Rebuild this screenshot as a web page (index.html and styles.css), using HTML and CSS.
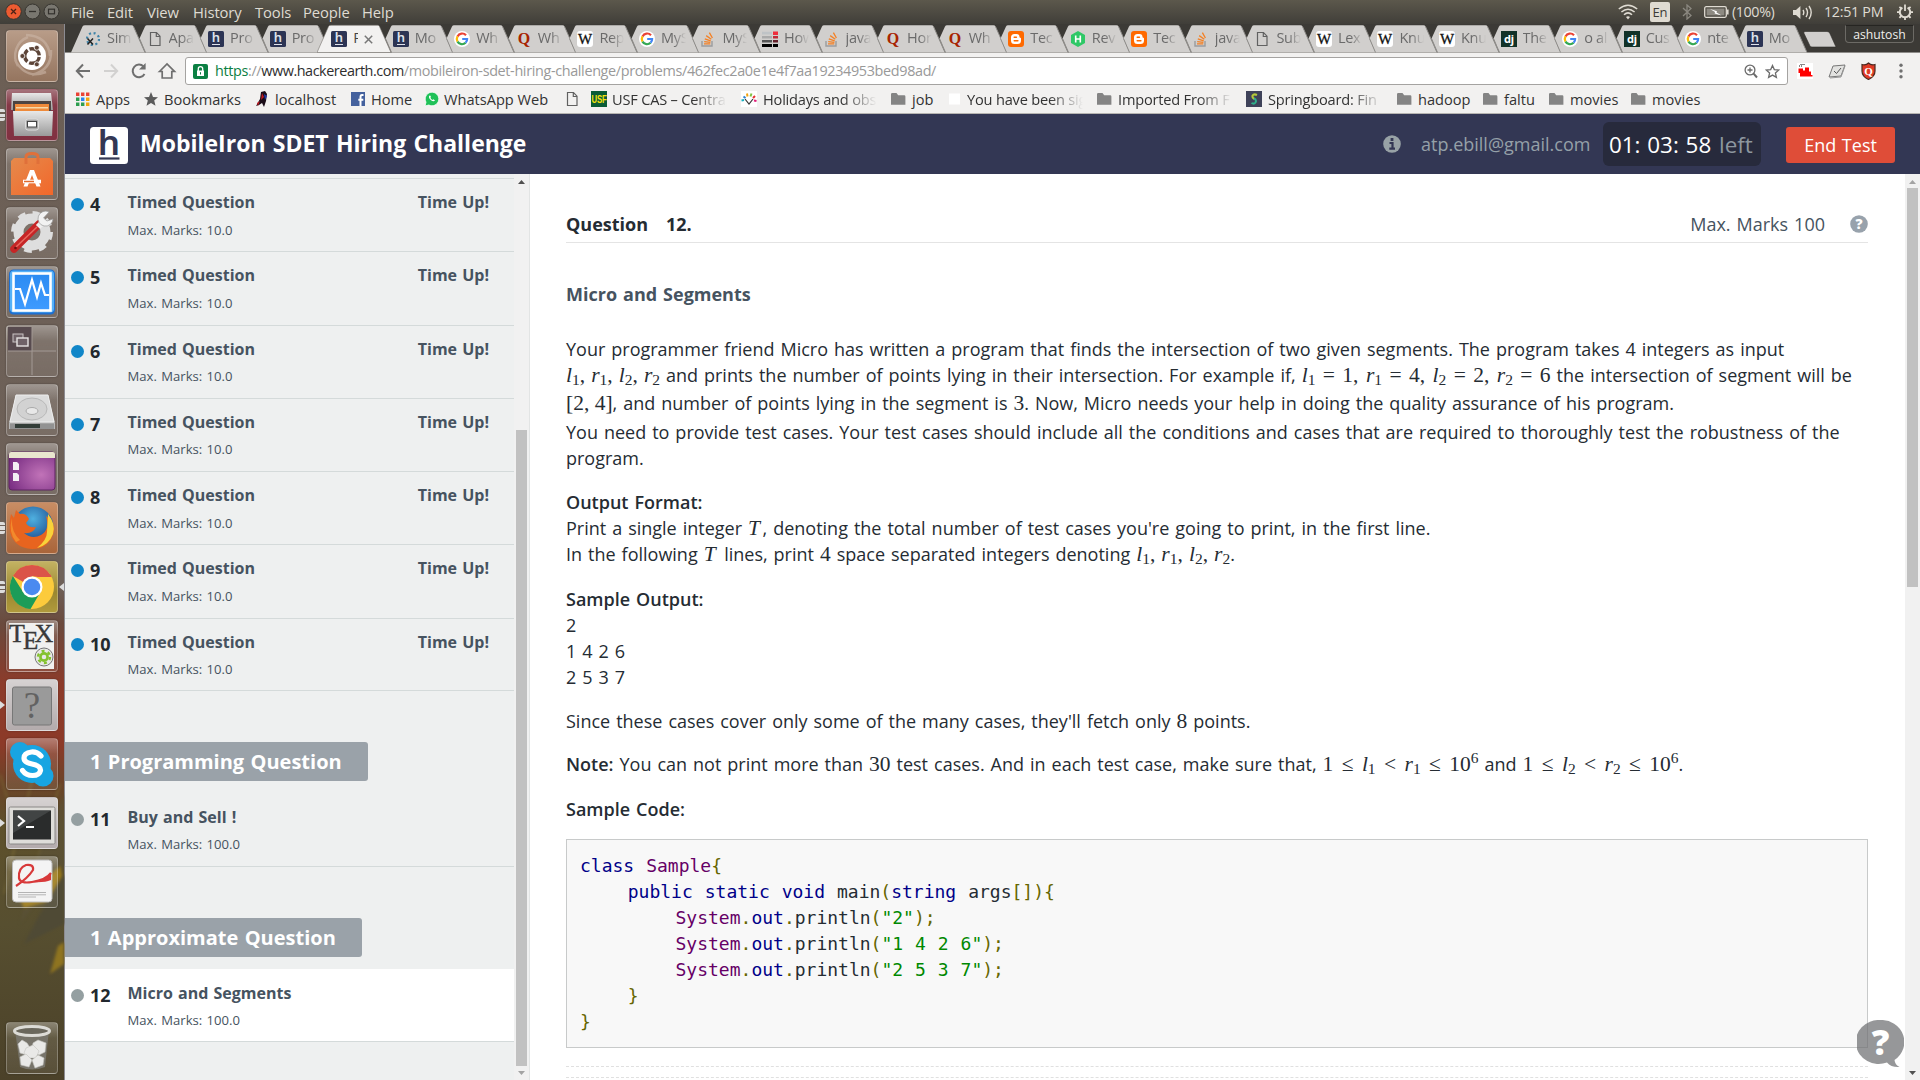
FILE: index.html
```html
<!DOCTYPE html>
<html lang="en">
<head>
<meta charset="utf-8">
<title>MobileIron SDET Hiring Challenge</title>
<link rel="stylesheet" href="styles.css">
</head>
<body>
<svg class="defs" width="0" height="0">
  <defs>
    <linearGradient id="steel" x1="0" y1="0" x2="0" y2="1"><stop offset="0" stop-color="#e8e8e8"/><stop offset="1" stop-color="#9a9a9a"/></linearGradient>
    <linearGradient id="bag" x1="0" y1="0" x2="1" y2="1"><stop offset="0" stop-color="#e58a4c"/><stop offset="1" stop-color="#f2672a"/></linearGradient>
    <linearGradient id="vm" x1="0" y1="0" x2="0" y2="1"><stop offset="0" stop-color="#2b8bf2"/><stop offset="1" stop-color="#3f9bff"/></linearGradient>
    <radialGradient id="purple" cx=".7" cy=".6" r=".8"><stop offset="0" stop-color="#c173b8"/><stop offset="1" stop-color="#752a80"/></radialGradient>
    <radialGradient id="globe" cx=".5" cy=".3" r=".7"><stop offset="0" stop-color="#4fb0e0"/><stop offset="1" stop-color="#12387e"/></radialGradient>
  </defs>
  <symbol id="tab" viewBox="0 0 76 28"><path d="M12.5 28L6.5 14L12 2Q12.6 .7 14 .7H60.5Q62 .7 62.5 2L74 28Z" fill="#d1cfcd"/><path d="M12.5 28L6.5 14M62.5 2L74 28" stroke="#8e8c89" fill="none"/></symbol>
  <symbol id="tab-full" viewBox="0 0 76 28"><path d="M0 28L11.5 2Q12.2 .7 14 .7H60.5Q62 .7 62.5 2L74 28Z" fill="#d1cfcd"/><path d="M62.5 2L74 28" stroke="#8e8c89" fill="none"/></symbol>
  <symbol id="tab-active" viewBox="0 0 76 28"><path d="M0 28L11.5 2Q12.2 .7 14 .7H60.5Q62 .7 62.5 2L74 28Z" fill="#f2f1f0" stroke="#77746f" stroke-width=".6"/></symbol>
  <symbol id="f-sim" viewBox="0 0 16 16"><circle cx="8" cy="8" r="6" fill="none" stroke="#3d83a8" stroke-width="2.200" stroke-dasharray="2 2.700"/><path d="M2.5 7.5L8 13.5M8 7.5L2.5 13.5" stroke="#222" stroke-width="1.5"/></symbol>
  <symbol id="f-doc" viewBox="0 0 16 16"><path d="M3.5 1.5H9.5L13 5.2V14.5H3.5ZM9.3 1.5V5.5H13" fill="none" stroke="#616161" stroke-width="1.2"/></symbol>
  <symbol id="f-h" viewBox="0 0 16 16"><rect width="16" height="16" rx="1.5" fill="#2c3454"/><text x="8" y="11.2" text-anchor="middle" font-family="Noto Sans" font-weight="600" font-size="13" fill="#dfe2ec">h</text><path d="M4 13.5H12" stroke="#dfe2ec"/></symbol>
  <symbol id="f-g" viewBox="0 0 16 16"><circle cx="8" cy="8" r="8" fill="#fff"/><path d="M12 4.2A5.2 5.2 0 0 0 3.5 5.4" stroke="#ea4335" stroke-width="2.2" fill="none"/><path d="M3.5 5.4A5.4 5.4 0 0 0 3.5 10.6" stroke="#fbbc05" stroke-width="2.2" fill="none"/><path d="M3.5 10.6A5.2 5.2 0 0 0 11.6 11.8" stroke="#34a853" stroke-width="2.2" fill="none"/><path d="M11.6 11.8A5.2 5.2 0 0 0 13.1 8H8.2" stroke="#4285f4" stroke-width="2.2" fill="none"/></symbol>
  <symbol id="f-q" viewBox="0 0 16 16"><text x="8" y="13" text-anchor="middle" font-family="Liberation Serif" font-weight="700" font-size="16" fill="#a82400">Q</text></symbol>
  <symbol id="f-w" viewBox="0 0 16 16"><rect width="16" height="16" rx="3" fill="#fff"/><text x="8" y="13" text-anchor="middle" font-family="Liberation Serif" font-size="15" fill="#111" stroke="#111" stroke-width=".3">W</text></symbol>
  <symbol id="f-so" viewBox="0 0 16 16"><path d="M2 10V15H12V10" fill="none" stroke="#9a9c9e" stroke-width="1.4"/><path d="M4 12.8H10.3M4.2 10.6L10.4 11.4M4.8 7.8L10.7 9.8M6.2 4.6L11.3 8.2M9.4 1.6L12.4 7" stroke="#f48024" stroke-width="1.3"/></symbol>
  <symbol id="f-how" viewBox="0 0 16 16"><path d="M0 5H10V7.5H0Z" fill="#aaa"/><path d="M0 9H10V11.5H0Z" fill="#555"/><path d="M0 13H10V16H0ZM11 13H16V16H11Z" fill="#000"/><path d="M11 .5H16V4H11Z" fill="#ef2d3c"/><path d="M11 5H16V7.5H11Z" fill="#c02a38"/><path d="M11 9H16V11.5H11Z" fill="#64202a"/><path d="M0 .8H10V3.4H0Z" fill="#bfc3c6"/></symbol>
  <symbol id="f-b" viewBox="0 0 16 16"><rect width="16" height="16" rx="3" fill="#ff6a00"/><path d="M6.500 3H8.500Q11.500 3 11.500 6Q11.500 6.800 12.300 6.800Q13 6.800 13 7.600V9.500Q13 13 9.500 13H6.500Q3 13 3 9.500V6.500Q3 3 6.500 3Z" fill="#fff"/><path d="M6.200 6.200H8.400M6.200 9.800H9.900" stroke="#ff6a00" stroke-width="1.500" stroke-linecap="round"/></symbol>
  <symbol id="f-hr" viewBox="0 0 16 16"><path d="M8 0L15 4V12L8 16L1 12V4Z" fill="#2ec866"/><path d="M5.7 4.5V11.5M10.3 4.5V11.5M5.7 8H10.3" stroke="#fff" stroke-width="1.6"/></symbol>
  <symbol id="f-dj" viewBox="0 0 16 16"><rect width="16" height="16" fill="#113228"/><text x="8" y="11.6" text-anchor="middle" font-family="Noto Sans" font-weight="700" font-size="11" fill="#fff">dj</text></symbol>
  <symbol id="folder" viewBox="0 0 15 16"><path d="M0 3.2Q0 2 1.2 2H5.5L7.2 4.2H13.2Q14.4 4.2 14.4 5.4V13.8H0Z" fill="#848484"/></symbol>
</svg>

<header class="panel">
  <svg class="winbtns" viewBox="0 0 62 24"><circle cx="13.5" cy="11.5" r="7.8" fill="#ec5b31" stroke="#373530"/><path d="M11 9L16 14M16 9L11 14" stroke="#4b2216" stroke-width="1.3"/><circle cx="32.5" cy="11.5" r="7.5" fill="#797770" stroke="#373530"/><path d="M29 11.5H36" stroke="#33312d" stroke-width="1.3"/><circle cx="51.5" cy="11.5" r="7.5" fill="#797770" stroke="#373530"/><rect x="48.5" y="9.2" width="6" height="4.6" fill="none" stroke="#33312d" stroke-width="1.2"/></svg>
  <nav class="menus"><span>File</span><span>Edit</span><span>View</span><span>History</span><span>Tools</span><span>People</span><span>Help</span></nav>
  <div class="tray">
    <svg width="20" height="16" viewBox="0 0 20 16" fill="none" stroke="#dfdbd2" stroke-width="1.5"><path d="M.8 5Q10-2.6 19.2 5M3.4 8Q10 2.4 16.6 8M6 10.8Q10 7 14 10.8"/><path d="M8 13L10 15.4L12 13Q10 11.4 8 13Z" fill="#dfdbd2" stroke="none"/></svg>
    <span class="lang">En</span>
    <svg class="bt" width="10" height="16" viewBox="0 0 10 16" fill="none" stroke="#8b8880" stroke-width="1.3"><path d="M1 4L9 11.5L5 15V1L9 4.5L1 12"/></svg>
    <svg class="bat" width="25" height="12" viewBox="0 0 25 12"><rect x=".7" y=".7" width="21.6" height="10.6" rx="1.5" fill="none" stroke="#dfdbd2" stroke-width="1.3"/><rect x="2.6" y="2.6" width="17.8" height="6.8" fill="#8d8a82"/><path d="M23 3.5H24.6V8.5H23Z" fill="#dfdbd2"/><path d="M6 3L13 5.2L12.5 6.4L17.6 9.6L10.6 7.4L11 6Z" fill="#fff"/></svg>
    <span class="pct">(100%)</span>
    <svg class="vol" width="20" height="15" viewBox="0 0 20 15" fill="none" stroke="#dfdbd2" stroke-width="1.4"><path d="M0 5H3L7.4 1V14L3 10H0Z" fill="#dfdbd2" stroke="none"/><path d="M10 5Q11.6 7.5 10 10M13 3Q16 7.5 13 12M16 1Q20.4 7.5 16 14"/></svg>
    <span class="clock">12:51 PM</span>
    <svg class="gear" width="16" height="16" viewBox="0 0 16 16" fill="none" stroke="#dfdbd2"><path d="M5.4 3.6A5.2 5.2 0 1 0 10.6 3.6" stroke-width="2"/><path d="M8 .5V7" stroke-width="1.8"/><path d="M0 8.2H3M13 8.2H16M8 13V16M2.4 2.8L4.2 4.4M13.6 2.8L11.8 4.4M2.4 13.8L4.2 12M13.6 13.8L11.8 12" stroke-width="1.8"/></svg>
  </div>
</header>

<div class="desktop">
<aside class="launcher">
  <svg class="petals" viewBox="0 0 64 230"><path d="M0 0L18 60L4 120M34 0L10 90M60 10L30 110" stroke="#7b6a35" stroke-width="2" fill="none" opacity=".6"/><path d="M64 20L34 90L20 150L64 90Z" fill="#5a5238" opacity=".6"/><path d="M16 118L34 104L38 92L46 104L60 92L62 102L54 116L46 128L24 134Z" fill="#9c7a18"/><path d="M64 100L40 140L24 170L64 150Z" fill="#4f4a35"/><path d="M58 172L64 168V190L50 200Z" fill="#8f7420"/></svg>

  <div class="tile t-brown"><svg viewBox="0 0 52 52"><path d="M12 36A20 20 0 0 1 22 7M20 5Q42 6 44 26M45 20Q46 40 26 45M40 42Q20 50 9 30" fill="none" stroke="#cbb6a6" stroke-width="2.500" opacity=".6"/><circle cx="26" cy="26" r="14" fill="#fff"/><circle cx="26" cy="26" r="7.3" fill="none" stroke="#5c4438" stroke-width="3.4" stroke-dasharray="13.3 2" stroke-dashoffset="-1"/><g fill="#5c4438" stroke="#fff" stroke-width=".8"><circle cx="16.4" cy="26" r="2.5"/><circle cx="30.8" cy="17.7" r="2.5"/><circle cx="30.8" cy="34.3" r="2.5"/></g></svg></div>
  <div class="tile t-maroon run3"><svg viewBox="0 0 52 52"><path d="M6 4H45L47 21H5Z" fill="url(#steel)"/><path d="M7 12H45V22H7Z" fill="#4d4542"/><path d="M9 15H43V22H9Z" fill="#ee8a3a"/><path d="M10 18H42V19.5H10Z" fill="#f7d9a8"/><path d="M7 22H47L46 47H8Z" fill="url(#steel)"/><rect x="19.500" y="30" width="13" height="11" rx="2.500" fill="#a8a8a8" stroke="#ddd"/><rect x="21.500" y="32.500" width="9" height="5.500" fill="#fff" stroke="#444"/></svg></div>
  <div class="tile"><svg viewBox="0 0 52 52"><path d="M5 13L8 10H44L47 13V47H5Z" fill="url(#bag)"/><path d="M20 16V9Q20 5.500 26 5.500Q32 5.500 32 9V16" fill="none" stroke="#e0703a" stroke-width="3"/><path d="M24 22H28L34.500 38.500H30.500L26 27L21.500 38.500H17.500Z" fill="#fff"/><path d="M17 33.500H35" stroke="#fff" stroke-width="3.600"/><path d="M18 33.500H28" stroke="#e06a2c" stroke-width="1.500"/></svg></div>
  <div class="tile"><svg viewBox="0 0 52 52"><circle cx="26" cy="25" r="13.500" fill="none" stroke="#dedede" stroke-width="10"/><circle cx="26" cy="25" r="18.500" fill="none" stroke="#dedede" stroke-width="5" stroke-dasharray="7.500 7.030"/><path d="M8 42L33 17" stroke="#c62526" stroke-width="7.500" stroke-linecap="round"/><path d="M10 40L31 20" stroke="#e86a60" stroke-width="1.500"/><path d="M32 20L38 14" stroke="#eee" stroke-width="6"/><path d="M43 5A7.500 7.500 0 1 0 47 12L41 14L37.500 11Z" fill="#f2f2f2" stroke="#999" stroke-width=".7"/><circle cx="9.500" cy="41" r="1.300" fill="#6d1010"/></svg></div>
  <div class="tile"><svg viewBox="0 0 52 52"><rect x="3" y="3.500" width="46" height="45" rx="4.500" fill="#1e6fd0"/><rect x="4" y="4.500" width="44" height="42" rx="4" fill="#55b1f8"/><rect x="7.500" y="7.500" width="37" height="37" fill="url(#vm)" stroke="#fff" stroke-width="2.600"/><path d="M9 23H14L19 38L26 14L31 31L35 17L39 29H43" fill="none" stroke="#fff" stroke-width="2.200"/></svg></div>
  <div class="tile"><svg viewBox="0 0 52 52"><rect x="2" y="2" width="24" height="24" fill="#584b4f"/><path d="M26 2V50M2 26H50" stroke="#a39a95"/><rect x="7" y="9" width="10" height="8" fill="#6f6268" stroke="#c9c4c4"/><rect x="11" y="13" width="11" height="8" fill="#6f6268" stroke="#e6e3e3" stroke-width="1.400"/></svg></div>
  <div class="tile"><svg viewBox="0 0 52 52"><path d="M10 11H42L49 39V45H3V39Z" fill="#b7b7b7"/><path d="M10 11H42L48 38H4Z" fill="#dcdcdc" stroke="#eee"/><ellipse cx="26" cy="25" rx="15" ry="11" fill="#d2d2d2" stroke="#b8b8b8"/><ellipse cx="26" cy="27" rx="6" ry="3.500" fill="#e8e8e8" stroke="#aaa"/><path d="M4 39.500H48V45H4Z" fill="#929292"/><path d="M9 40H34V44H9Z" fill="#333d38"/></svg></div>
  <div class="tile"><svg viewBox="0 0 52 52"><rect x="3" y="9" width="46" height="38" rx="3" fill="url(#purple)" stroke="#5e2462"/><path d="M3 11Q3 9 5 9H47Q49 9 49 11V15H3Z" fill="#e9e6cf"/><path d="M7 19H11L13 21V27H7ZM7 30H11L13 32V38H7Z" fill="#f3eef3"/></svg></div>
  <div class="tile t-orange run3"><svg viewBox="0 0 52 52"><circle cx="27" cy="25" r="20.500" fill="url(#globe)"/><path d="M5 12L8 16L10 8L14 12Q20 11 23 17L20 21Q22 26 30 25Q27 32 18 31Q26 38 35 33Q44 28 40 14Q49 20 48 29Q44 47 26 47Q8 46 4 30Q3 20 5 12Z" fill="#e8641f"/><path d="M42 12Q50 22 47 32Q43 43 31 46Q41 38 41 30Z" fill="#f8d23a"/><path d="M6 16Q5 30 14 38L10 40Q2 30 6 16Z" fill="#f28a2c"/></svg></div>
  <div class="tile t-gold run3 focus"><svg viewBox="0 0 52 52"><circle cx="26" cy="26" r="22" fill="#fccb3c"/><path d="M26 26L6.900 15A22 22 0 0 1 45.100 15H26Z" fill="#db5349"/><path d="M6.900 15A22 22 0 0 0 24.500 48L34.500 31L17 31Z" fill="#1c9c58"/><path d="M26 16H45.600L44 13Z" fill="#db5349"/><circle cx="26" cy="26" r="10.500" fill="#fff"/><circle cx="26" cy="26" r="8.300" fill="#4a8af0"/></svg></div>
  <div class="tile"><svg viewBox="0 0 52 52"><rect x="3" y="3" width="45" height="46" fill="#f1f1f0"/><g font-family="Liberation Serif" fill="#3a3a3a" stroke="#3a3a3a" stroke-width=".4"><text x="3" y="22" font-size="26">T</text><text x="17" y="28.500" font-size="25">E</text><text x="28.500" y="22" font-size="26">X</text></g><circle cx="38" cy="37" r="9" fill="#e8e8e6" stroke="#777"/><circle cx="38" cy="37" r="3.600" fill="none" stroke="#83c22e" stroke-width="2.600"/><circle cx="38" cy="37" r="6" fill="none" stroke="#83c22e" stroke-width="2.400" stroke-dasharray="3 3.280"/></svg></div>
  <div class="tile t-light run1"><svg viewBox="0 0 52 52"><rect x="6.500" y="8" width="39" height="38" rx="2" fill="#9a9a9a" stroke="#777"/><text x="26" y="39" text-anchor="middle" font-family="Liberation Serif" font-size="37" fill="#626262">?</text></svg></div>
  <div class="tile"><svg viewBox="0 0 52 52"><circle cx="26" cy="26" r="19" fill="#18a5e2"/><circle cx="14" cy="14" r="10" fill="#18a5e2"/><circle cx="37" cy="38" r="10.500" fill="#18a5e2"/><path d="M35 18Q31 13.500 25.500 14Q18 15 18 20Q18 24.500 26 26Q35 28 34.500 32.500Q33.500 37.500 26.500 37.500Q20 37.500 16.500 32.500" fill="none" stroke="#fff" stroke-width="5.200" stroke-linecap="round"/></svg></div>
  <div class="tile t-light run1"><svg viewBox="0 0 52 52"><rect x="3" y="10" width="46" height="37" rx="1.500" fill="#deddd9" stroke="#8a8886"/><rect x="7" y="13.500" width="38" height="29" fill="#2a2c2c"/><path d="M7 13.500H45L7 36Z" fill="#414444"/><path d="M12 19L18 24L12 29M20 30H28" fill="none" stroke="#fff" stroke-width="2.200"/></svg></div>
  <div class="tile"><svg viewBox="0 0 52 52"><rect x="6.500" y="4" width="39.500" height="42" rx="3.500" fill="#f4f4f4" stroke="#bbb"/><path d="M10 30Q22 22 27 14Q28 8 20 9Q12 12 13 22Q14 28 26 26Q40 24 45 17" fill="none" stroke="#d8393a" stroke-width="2.200"/><path d="M26 26Q38 26 45 17V24Q38 27 26 26Z" fill="#d8393a"/><path d="M12 36.500H40M12 38.800H40M12 41H30" stroke="#b4b4b4"/></svg></div>
  <div class="tile trash"><svg viewBox="0 0 52 52"><path d="M9 8L14 45Q26 50 39 45L43 8Z" fill="#77746a"/><g fill="#e9e9e7" stroke="#c4c4c0" stroke-width=".6"><path d="M12 22L16 18L21 21L25 27L21 33L14 31Z"/><path d="M27 21L32 18L40 21L39 30L33 33L26 29Z"/><path d="M20 26L27 23L33 29L30 36L22 36L18 31Z"/><path d="M14 35L20 32L26 38L23 45L15 43Z"/><path d="M26 38L32 33L38 36L37 43L29 46Z"/></g><ellipse cx="26" cy="9" rx="17.500" ry="4.500" fill="#6a675c" stroke="#dcdbd6" stroke-width="3"/></svg></div>
</aside>

<div class="browser">
  <div class="tabstrip">
    <div class="tabs">
      <div class="tab"><svg class="shape"><use href="#tab-full"/></svg><svg class="fav"><use href="#f-sim"/></svg><span>Sim</span></div>
      <div class="tab"><svg class="shape"><use href="#tab"/></svg><svg class="fav"><use href="#f-doc"/></svg><span>Apa</span></div>
      <div class="tab"><svg class="shape"><use href="#tab"/></svg><svg class="fav"><use href="#f-h"/></svg><span>Pro</span></div>
      <div class="tab"><svg class="shape"><use href="#tab"/></svg><svg class="fav"><use href="#f-h"/></svg><span>Pro</span></div>
      <div class="tab active"><svg class="shape"><use href="#tab-active"/></svg><svg class="fav"><use href="#f-h"/></svg><span>P</span><svg class="close" viewBox="0 0 9 9"><path d="M.8 .8L8.200 8.200M8.200 .8L.8 8.200" stroke="#777" stroke-width="1.500"/></svg></div>
      <div class="tab"><svg class="shape"><use href="#tab"/></svg><svg class="fav"><use href="#f-h"/></svg><span>Mo</span></div>
      <div class="tab"><svg class="shape"><use href="#tab"/></svg><svg class="fav"><use href="#f-g"/></svg><span>Wh</span></div>
      <div class="tab"><svg class="shape"><use href="#tab"/></svg><svg class="fav"><use href="#f-q"/></svg><span>Wh</span></div>
      <div class="tab"><svg class="shape"><use href="#tab"/></svg><svg class="fav"><use href="#f-w"/></svg><span>Rep</span></div>
      <div class="tab"><svg class="shape"><use href="#tab"/></svg><svg class="fav"><use href="#f-g"/></svg><span>MyS</span></div>
      <div class="tab"><svg class="shape"><use href="#tab"/></svg><svg class="fav"><use href="#f-so"/></svg><span>MyS</span></div>
      <div class="tab"><svg class="shape"><use href="#tab"/></svg><svg class="fav"><use href="#f-how"/></svg><span>How</span></div>
      <div class="tab"><svg class="shape"><use href="#tab"/></svg><svg class="fav"><use href="#f-so"/></svg><span>java</span></div>
      <div class="tab"><svg class="shape"><use href="#tab"/></svg><svg class="fav"><use href="#f-q"/></svg><span>Hor</span></div>
      <div class="tab"><svg class="shape"><use href="#tab"/></svg><svg class="fav"><use href="#f-q"/></svg><span>Wh</span></div>
      <div class="tab"><svg class="shape"><use href="#tab"/></svg><svg class="fav"><use href="#f-b"/></svg><span>Tec</span></div>
      <div class="tab"><svg class="shape"><use href="#tab"/></svg><svg class="fav"><use href="#f-hr"/></svg><span>Rev</span></div>
      <div class="tab"><svg class="shape"><use href="#tab"/></svg><svg class="fav"><use href="#f-b"/></svg><span>Tec</span></div>
      <div class="tab"><svg class="shape"><use href="#tab"/></svg><svg class="fav"><use href="#f-so"/></svg><span>java</span></div>
      <div class="tab"><svg class="shape"><use href="#tab"/></svg><svg class="fav"><use href="#f-doc"/></svg><span>Sub</span></div>
      <div class="tab"><svg class="shape"><use href="#tab"/></svg><svg class="fav"><use href="#f-w"/></svg><span>Lex</span></div>
      <div class="tab"><svg class="shape"><use href="#tab"/></svg><svg class="fav"><use href="#f-w"/></svg><span>Knu</span></div>
      <div class="tab"><svg class="shape"><use href="#tab"/></svg><svg class="fav"><use href="#f-w"/></svg><span>Knu</span></div>
      <div class="tab"><svg class="shape"><use href="#tab"/></svg><svg class="fav"><use href="#f-dj"/></svg><span>The</span></div>
      <div class="tab"><svg class="shape"><use href="#tab"/></svg><svg class="fav"><use href="#f-g"/></svg><span>o al</span></div>
      <div class="tab"><svg class="shape"><use href="#tab"/></svg><svg class="fav"><use href="#f-dj"/></svg><span>Cus</span></div>
      <div class="tab"><svg class="shape"><use href="#tab"/></svg><svg class="fav"><use href="#f-g"/></svg><span>nte</span></div>
      <div class="tab"><svg class="shape"><use href="#tab"/></svg><svg class="fav"><use href="#f-h"/></svg><span>Mo</span></div>
    </div>
    <svg class="newtab" viewBox="0 0 34 17"><path d="M2 .5H24Q26 .5 26.700 2L33 16H9Q7.500 16 7 15L.8 2Q.4 .5 2 .5Z" fill="#d1cfcd" stroke="#2e2c29" stroke-width=".6"/></svg>
    <div class="user">ashutosh</div>
  </div>

  <div class="toolbar">
    <svg class="nav" width="106" height="18" viewBox="0 0 106 18" fill="none" stroke="#6f6f6f" stroke-width="2"><path d="M15 9H2M8 2.500L1.800 9L8 15.500"/><path d="M29 9H42M36 2.500L42.200 9L36 15.500" stroke="#d2d1d0"/><path d="M69.500 12A6.300 6.300 0 1 1 68.600 4.600"/><path d="M70.600 1V7.500H64Z" fill="#6f6f6f" stroke="none"/><path d="M84.500 9.500L92 2L99.500 9.500H96.800V16H87.200V9.500Z" stroke-width="1.700"/></svg>
    <div class="omnibox">
      <svg width="15" height="15" viewBox="0 0 15 15"><rect width="15" height="15" rx="2" fill="#0b8043"/><rect x="4" y="6.500" width="7" height="5.500" fill="#fff"/><path d="M5.300 7V4.800A2.200 2.200 0 0 1 9.700 4.800V7" fill="none" stroke="#fff" stroke-width="1.300"/><path d="M7.500 8.200V10.500" stroke="#0b8043"/></svg>
      <div class="url"><b>https</b><i>://</i><em>www.hackerearth.com</em><i>/mobileiron-sdet-hiring-challenge/problems/462fec2a0e1e4f7aa19234953bed98ad/</i></div>
      <svg width="14" height="15" viewBox="0 0 14 15" fill="none" stroke="#6b6b6b" stroke-width="1.300"><circle cx="6" cy="6" r="4.900"/><path d="M3.500 6H8.500M6 3.500V8.500"/><path d="M9.600 9.600L13 13.500" stroke-width="2"/></svg>
      <svg width="15" height="15" viewBox="0 0 15 15" fill="none" stroke="#6b6b6b" stroke-width="1.300"><path d="M7.500 1.500L9.300 5.600L13.800 6L10.400 9L11.400 13.400L7.500 11.100L3.600 13.400L4.600 9L1.200 6L5.700 5.600Z"/></svg>
    </div>
    <svg class="ext" width="110" height="18" viewBox="0 0 110 18"><rect x="0" y="1" width="16" height="16" fill="#fff"/><path d="M1.500 6.500H6V8.500H8V5.500H12V9.500H14V13H15.500V14.500H3V11H1.500Z" fill="#f00"/><path d="M2 4H6M3.500 2.500H8" stroke="#111" stroke-dasharray="1 1"/><path d="M36 4L48 3L44 14L32 15Z" fill="#e2e2e0" stroke="#777"/><path d="M37 9L39.500 11.500L44 6" stroke="#555" fill="none"/><path d="M33 16L44 15L48 4" stroke="#999" fill="none"/><path d="M65 2.500Q69 3.500 71.500 1Q74 3.500 78 2.500V9Q78 14.500 71.500 17.500Q65 14.500 65 9Z" fill="#e03a25" stroke="#4a2a22" stroke-width="1.200"/><text x="71.500" y="13" text-anchor="middle" font-family="Liberation Serif" font-weight="700" font-size="11" fill="#fff">Q</text><circle cx="104" cy="3.300" r="1.700" fill="#707070"/><circle cx="104" cy="9" r="1.700" fill="#707070"/><circle cx="104" cy="14.700" r="1.700" fill="#707070"/></svg>
  </div>

  <div class="bookmarks">
    <span><svg width="14" height="16" viewBox="0 0 14 16"><path d="M0 1.500H3.400V5H0ZM5 1.500H8.400V5H5ZM10 1.500H13.400V5H10Z" fill="#ea4335"/><path d="M0 6.500H3.400V10H0Z" fill="#2e9e4f"/><path d="M5 6.500H8.400V10H5Z" fill="#2a85f0"/><path d="M10 6.500H13.400V10H10Z" fill="#f2a60c"/><path d="M0 11.500H3.400V15H0ZM5 11.500H8.400V15H5Z" fill="#2e9e4f"/><path d="M10 11.500H13.400V15H10Z" fill="#f2a60c"/></svg>Apps</span>
    <span><svg width="14" height="16" viewBox="0 0 14 16"><path d="M7 1L9 6L14 6.300L10.200 9.600L11.500 14.800L7 12L2.500 14.800L3.800 9.600L0 6.300L5 6Z" fill="#5b5b5b"/></svg>Bookmarks</span>
    <span><svg width="14" height="17" viewBox="0 0 14 17"><path d="M6 1L10 0L12 3L11 10L9 16L7 12L4 14L1 15L5 8Z" fill="#1a0c18"/><path d="M7 2L9 6L6 9Z" fill="#c01820"/><path d="M9 3L12 5L10 9Z" fill="#2038a8"/><path d="M2 12L5 10L3 15Z" fill="#c01820"/></svg>localhost</span>
    <span><svg width="14" height="16" viewBox="0 0 14 16"><rect y="1" width="14" height="14" fill="#44619d"/><path d="M9.500 15V9.800M12.500 4H11Q9.500 4 9.500 6V15M7.300 8.700H12.300" stroke="#fff" stroke-width="2" fill="none"/></svg>Home</span>
    <span class="wa"><svg width="15" height="16" viewBox="0 0 15 16"><path d="M1 15L2 11.200A6.800 6.800 0 1 1 4.800 14Z" fill="#1fc158" stroke="#fff" stroke-width=".8"/><path d="M5.200 4.800Q4.200 7 7 9.300Q9.600 11.200 11 9.600L9.400 8.300L8.400 9Q7 8.200 6.300 6.800L7 5.900L6.200 4.500Z" fill="#fff"/></svg>WhatsApp Web</span>
    <span><svg width="16" height="16"><use href="#f-doc"/></svg></span>
    <span class="fade usf"><svg width="16" height="16" viewBox="0 0 16 16"><rect width="16" height="16" fill="#0a5c36"/><text x="8" y="12" text-anchor="middle" font-family="Liberation Sans" font-weight="700" font-size="10" textLength="15" lengthAdjust="spacingAndGlyphs" fill="#f6e30c">USF</text></svg>USF CAS – Centra</span>
    <span class="fade"><svg width="16" height="16" viewBox="0 0 16 16"><rect width="16" height="16" fill="#fff"/><path d="M4 8L8 13L12 8" stroke="#333" fill="none" stroke-width="1.200"/><g stroke-width="2"><path d="M.5 9.500L3 9" stroke="#18b0c0"/><path d="M2.500 5.500L4.500 7" stroke="#2a80d0"/><path d="M6 2.500L6.500 5.500" stroke="#f3a20f"/><path d="M10.500 2.500L9.500 5.500" stroke="#7cc242"/><path d="M14 5L12 7" stroke="#e83030"/><path d="M15.500 10L13 9.500" stroke="#e0207a"/></g></svg>Holidays and obs</span>
    <span><svg width="15" height="16"><use href="#folder"/></svg>job</span>
    <span class="fade signed"><svg width="11" height="16" viewBox="0 0 11 16"><rect y="2.500" width="11" height="11" fill="#fff"/></svg>You have been sig</span>
    <span class="fade"><svg width="15" height="16"><use href="#folder"/></svg>Imported From F</span>
    <span class="fade"><svg width="16" height="16" viewBox="0 0 16 16"><rect width="16" height="16" fill="#3f4259"/><path d="M11 4Q8 2.500 6.500 4.500Q6 7 8.500 8" fill="none" stroke="#b6c93a" stroke-width="2"/><path d="M8 7.500Q11 9 9.500 11.500Q8 13.500 5.500 12" fill="none" stroke="#2eb08a" stroke-width="2"/></svg>Springboard: Fin</span>
    <span><svg width="15" height="16"><use href="#folder"/></svg>hadoop</span>
    <span><svg width="15" height="16"><use href="#folder"/></svg>faltu</span>
    <span><svg width="15" height="16"><use href="#folder"/></svg>movies</span>
    <span><svg width="15" height="16"><use href="#folder"/></svg>movies</span>
  </div>

  <div class="page">
    <header class="site">
      <svg class="logo" viewBox="0 0 38 37"><rect width="38" height="37" rx="3.500" fill="#fff"/><text x="19" y="27.500" text-anchor="middle" font-family="Noto Sans" font-weight="600" font-size="35" fill="#333754">h</text><path d="M9 31.500H29.500" stroke="#333754" stroke-width="2.200"/></svg>
      <h1>MobileIron SDET Hiring Challenge</h1>
      <svg class="info" viewBox="0 0 18 18"><circle cx="9" cy="9" r="8.800" fill="#98a2a6"/><path d="M9 3V6" stroke="#333754" stroke-width="2.800"/><path d="M6.500 8H9.500V13.500M6.300 13.600H12" stroke="#333754" stroke-width="2.200" fill="none"/></svg>
      <span class="email">atp.ebill@gmail.com</span>
      <span class="timer">01: 03: 58 <small>left</small></span>
      <button class="end">End Test</button>
    </header>

    <div class="cols">
      <div class="side">
        <div class="list">
          <div class="q"><i class="dot"></i><b>4</b><div><strong>Timed Question</strong><small>Max. Marks: 10.0</small></div><strong class="up">Time Up!</strong></div>
          <div class="q"><i class="dot"></i><b>5</b><div><strong>Timed Question</strong><small>Max. Marks: 10.0</small></div><strong class="up">Time Up!</strong></div>
          <div class="q"><i class="dot"></i><b>6</b><div><strong>Timed Question</strong><small>Max. Marks: 10.0</small></div><strong class="up">Time Up!</strong></div>
          <div class="q"><i class="dot"></i><b>7</b><div><strong>Timed Question</strong><small>Max. Marks: 10.0</small></div><strong class="up">Time Up!</strong></div>
          <div class="q"><i class="dot"></i><b>8</b><div><strong>Timed Question</strong><small>Max. Marks: 10.0</small></div><strong class="up">Time Up!</strong></div>
          <div class="q"><i class="dot"></i><b>9</b><div><strong>Timed Question</strong><small>Max. Marks: 10.0</small></div><strong class="up">Time Up!</strong></div>
          <div class="q"><i class="dot"></i><b>10</b><div><strong>Timed Question</strong><small>Max. Marks: 10.0</small></div><strong class="up">Time Up!</strong></div>
          <h2>1 Programming Question</h2>
          <div class="q todo"><i class="dot"></i><b>11</b><div><strong>Buy and Sell !</strong><small>Max. Marks: 100.0</small></div></div>
          <h2>1 Approximate Question</h2>
          <div class="q todo current"><i class="dot"></i><b>12</b><div><strong>Micro and Segments</strong><small>Max. Marks: 100.0</small></div></div>
        </div>
        <div class="scroll side-scroll"><svg class="arrow" viewBox="0 0 7 4"><path d="M0 4L3.500 0L7 4Z" fill="#505050"/></svg><div class="thumb"></div><svg class="arrow down" viewBox="0 0 7 4"><path d="M0 0L3.500 4L7 0Z" fill="#a3a3a3"/></svg></div>
      </div>

      <main>
        <div class="qhead"><b>Question</b><b>12.</b><span>Max. Marks 100</span><svg width="18" height="18" viewBox="0 0 18 18"><circle cx="9" cy="9" r="8.800" fill="#98a2ac"/><text x="9" y="14" text-anchor="middle" font-family="Open Sans" font-weight="800" font-size="14" fill="#fff">?</text></svg></div>
        <h3>Micro and Segments</h3>
        <p>
          <span class="ln">Your programmer friend Micro has written a program that finds the intersection of two given segments. The program takes 4 integers as input</span>
          <span class="ln w2"><span class="m vars"><i>l</i><sub>1</sub>, <i>r</i><sub>1</sub>, <i>l</i><sub>2</sub>, <i>r</i><sub>2</sub></span> and prints the number of points lying in their intersection. For example if, <span class="m eqs"><i>l</i><sub>1</sub> = 1, <i>r</i><sub>1</sub> = 4, <i>l</i><sub>2</sub> = 2, <i>r</i><sub>2</sub> = 6</span> the intersection of segment will be</span>
          <span class="ln w3"><span class="m">[2, 4]</span>, and number of points lying in the segment is <span class="m">3</span>. Now, Micro needs your help in doing the quality assurance of his program.</span>
          <span class="ln">You need to provide test cases. Your test cases should include all the conditions and cases that are required to thoroughly test the robustness of the</span>
          <span class="ln">program.</span>
        </p>
        <p class="loose">
          <span class="ln"><b>Output Format:</b></span>
          <span class="ln">Print a single integer <span class="m t1"><i>T</i></span>, denoting the total number of test cases you're going to print, in the first line.</span>
          <span class="ln">In the following <span class="m t1"><i>T</i></span> lines, print <span class="m">4</span> space separated integers denoting <span class="m vars"><i>l</i><sub>1</sub>, <i>r</i><sub>1</sub>, <i>l</i><sub>2</sub>, <i>r</i><sub>2</sub></span>.</span>
        </p>
        <p>
          <span class="ln"><b>Sample Output:</b></span>
          <span class="ln">2</span>
          <span class="ln">1 4 2 6</span>
          <span class="ln">2 5 3 7</span>
        </p>
        <p class="tight"><span class="ln">Since these cases cover only some of the many cases, they'll fetch only <span class="m">8</span> points.</span></p>
        <p class="loose"><span class="ln"><b>Note:</b> You can not print more than <span class="m">30</span> test cases. And in each test case, make sure that, <span class="m range">1 ≤ <i>l</i><sub>1</sub> &lt; <i>r</i><sub>1</sub> ≤ 10<sup>6</sup></span> and <span class="m range">1 ≤ <i>l</i><sub>2</sub> &lt; <i>r</i><sub>2</sub> ≤ 10<sup>6</sup></span>.</span></p>
        <p class="tight"><span class="ln"><b>Sample Code:</b></span></p>
<pre><i class="k">class</i> <i class="t">Sample</i><i class="p">{</i>
    <i class="k">public</i> <i class="k">static</i> <i class="k">void</i> main<i class="p">(</i><i class="k">string</i> args<i class="p">[]){</i>
        <i class="t">System</i><i class="p">.</i><i class="k">out</i><i class="p">.</i>println<i class="p">(</i><i class="s">"2"</i><i class="p">);</i>
        <i class="t">System</i><i class="p">.</i><i class="k">out</i><i class="p">.</i>println<i class="p">(</i><i class="s">"1 4 2 6"</i><i class="p">);</i>
        <i class="t">System</i><i class="p">.</i><i class="k">out</i><i class="p">.</i>println<i class="p">(</i><i class="s">"2 5 3 7"</i><i class="p">);</i>
    <i class="p">}</i>
<i class="p">}</i></pre>
        <div class="dashes"></div>
      </main>
      <div class="scroll main-scroll"><svg class="arrow" viewBox="0 0 7 4"><path d="M0 4L3.500 0L7 4Z" fill="#a3a3a3"/></svg><div class="thumb"></div><svg class="arrow down" viewBox="0 0 7 4"><path d="M0 0L3.500 4L7 0Z" fill="#505050"/></svg></div>
    </div>
    <svg class="help" viewBox="0 0 47 48"><path d="M23 0A23 22 0 1 0 30 42.500Q34 47.500 42.500 47Q38 45 37.500 40A23 22 0 0 0 23 0Z" fill="#6e6f72" fill-opacity=".72"/><text x="23.500" y="35" text-anchor="middle" font-family="Open Sans" font-weight="800" font-size="35" fill="#fff">?</text></svg>
  </div>
</div>
</div>
</body>
</html>
```
FILE: styles.css
```css
* { box-sizing: border-box; }
body { margin: 0; width: 1920px; height: 1080px; overflow: hidden; font-family: "Open Sans", "Noto Sans", sans-serif; color: #252c33; background: #fff; }
.defs { position: absolute; }
svg { display: block; flex: none; }

/* desktop panel */
.panel { height: 24px; display: flex; align-items: center; background: linear-gradient(#5c584c, #403e39); color: #dfdbd2; font-size: 14.8px; line-height: 22px; }
.winbtns { width: 62px; height: 24px; }
.menus { display: grid; grid-template-columns: 36px 40px 46px 62px 48px 59px 40px; padding-left: 9px; margin-top: -1px; letter-spacing: -.1px; }
.tray { margin-left: auto; display: flex; align-items: center; width: 302px; font-size: 14.3px; }
.lang { margin-left: 12px; width: 20px; height: 20px; line-height: 20px; border-radius: 2px; background: #dfdbd2; color: #3c3b37; text-align: center; font-size: 13px; }
.bt { margin-left: 12px; }
.bat { margin-left: 12px; }
.pct { margin-left: 3px; width: 61px; letter-spacing: -.4px; }
.vol { margin-left: 0; }
.clock { margin-left: 11px; width: 61px; letter-spacing: -.3px; white-space: nowrap; }
.gear { margin-left: 12px; }

.desktop { display: flex; height: 1056px; }

/* launcher */
.launcher { position: relative; width: 65px; padding: 6px 0 0 6px; display: flex; flex-direction: column; gap: 7px; border-right: 1px solid #8c8b91; background: linear-gradient(#6c5f55 0, #6e6159 560px, #6a4a3d 600px, #8c3b2a 660px, #8c3a28 720px, #6b4428 760px, #5e502b 800px, #574f30 900px, #4b4129 1056px); }
.petals { position: absolute; left: 0; top: 750px; width: 64px; height: 230px; filter: blur(1.500px); }
.tile { position: relative; width: 52px; height: 52px; flex: none; border-radius: 4px; border: 1px solid rgba(255,255,255,.26); background: linear-gradient(rgba(255,255,255,.34), rgba(255,255,255,.12) 30%, rgba(255,255,255,.08)); box-shadow: 0 0 2px rgba(0,0,0,.35); }
.tile > svg { width: 52px; height: 52px; margin: -1px; }
.t-brown { background: linear-gradient(#b89c88, #95755f); }
.t-maroon { background: linear-gradient(#a5737b, #853947 30%, #813141); }
.t-orange { background: linear-gradient(#c88d64, #a9653a); }
.t-gold { background: linear-gradient(#c3b262, #9b8730 60%, #b09a3c); }
.t-light { background: linear-gradient(#d6d2d2, #b3abac); }
.trash { margin-top: auto; margin-bottom: 6px; }
.run3::before { content: ""; position: absolute; left: -7px; top: 19px; width: 5px; height: 12px; background: repeating-linear-gradient(#ddd 0 3px, transparent 3px 4.500px); border-radius: 0 2px 2px 0; }
.run1::before { content: ""; position: absolute; left: -7px; top: 21px; border: solid transparent; border-width: 4px 0 4px 5px; border-left-color: #ddd; }
.focus::after { content: ""; position: absolute; right: -7px; top: 21px; border: solid transparent; border-width: 4px 5px 4px 0; border-right-color: #ddd; }

/* browser chrome */
.browser { width: 1855px; display: flex; flex-direction: column; }
.tabstrip { height: 29px; padding-left: 6px; display: flex; background: #3c3a36; border-bottom: 1px solid #8e8c89; }
.tabs { display: flex; margin-top: 0; width: 1724px; }
.tab { position: relative; width: 61.560px; height: 29px; flex: none; display: flex; align-items: center; padding-left: 14px; font-size: 14.500px; color: #6a6a6a; }
.shape { position: absolute; left: 0; top: 0; width: 76px; height: 29px; overflow: visible; }
.fav { position: relative; width: 16px; height: 16px; }
.tab span { position: relative; margin-left: 6px; margin-top: -2px; width: 25px; overflow: hidden; white-space: nowrap; line-height: 22px; letter-spacing: -.3px; -webkit-mask-image: linear-gradient(90deg, #000 50%, transparent); mask-image: linear-gradient(90deg, #000 50%, transparent); }
.tab.active { z-index: 1; color: #444; height: 29px; }
.tab.active span { width: 5px; -webkit-mask-image: none; mask-image: none; }
.close { position: relative; width: 9px; height: 9px; margin-left: 6px; margin-top: 1px; }
.newtab { width: 34px; height: 17px; margin: 7px 0 0 8px; }
.user { margin: 1px 0 0 8px; width: 69px; height: 18px; border: 1px solid #6c6a65; border-top-color: #262522; border-radius: 0 0 4px 4px; background: #3a3935; color: #f0efec; font-size: 12.200px; line-height: 17px; text-align: center; }
.toolbar { height: 35px; padding-left: 10px; display: flex; align-items: center; background: #f2f1f0; padding-top: 1px; }
.nav { margin-right: 4px; }
.omnibox { width: 1603px; height: 28px; padding: 0 7px 0 7px; display: flex; align-items: center; gap: 7px; border: 1px solid #a5a3a1; border-radius: 3px; background: #fff; }
.url { flex: 1; font-size: 14.400px; line-height: 22px; letter-spacing: -.35px; color: #999; white-space: nowrap; }
.url b { font-weight: 400; color: #0b8043; }
.url i { font-style: normal; }
.url em { font-style: normal; color: #2e2e2e; letter-spacing: -.45px; }
.ext { margin-left: 9px; }
.bookmarks { height: 26px; padding-left: 11px; display: grid; grid-template-columns: 68px 111px 96px 73px 140px 27px 150px 150px 58px 148px 149px 151px 86px 66px 82px 82px; background: #f2f1f0; border-bottom: 1px solid #b6b4b1; font-size: 14.600px; color: #333; line-height: 22px; }
.bookmarks span { display: flex; align-items: center; gap: 6px; white-space: nowrap; overflow: hidden; height: 22px; }
.bookmarks .fade { margin-right: 14px; letter-spacing: -.2px; -webkit-mask-image: linear-gradient(90deg, #000 75%, transparent); mask-image: linear-gradient(90deg, #000 75%, transparent); }
.bookmarks .signed { gap: 7px; }
.bookmarks .usf, .bookmarks .wa { gap: 5px; }

/* page */
.page { position: relative; flex: 1; display: flex; flex-direction: column; }
.site { height: 60px; display: flex; align-items: center; padding-left: 25px; background: #333754; }
.logo { width: 38px; height: 37px; margin-top: 2px; }
h1 { margin: -3px 0 0 12px; font-size: 23px; line-height: 32px; font-weight: 700; word-spacing: 1.300px; color: #fff; white-space: nowrap; }
.info { width: 18px; height: 18px; margin-left: auto; }
.email { margin-left: 20px; width: 169px; font-size: 18px; color: #95a0a8; }
.timer { margin-left: 13px; width: 158px; height: 44px; line-height: 45px; border-radius: 6px; background: #272a3c; color: #fff; font-size: 22.400px; padding-left: 6px; word-spacing: 1px; white-space: nowrap; }
.timer small { font-size: 22.400px; color: #8d979f; margin-left: 1px; }
.end { margin: 2px 25px 0 25px; width: 109px; height: 36px; border: 0; border-radius: 3px; background: #df4d38; color: #fff; font: 18px/36px "Open Sans", sans-serif; word-spacing: 1px; padding: 0; }

.cols { display: flex; height: 906px; }
.side { width: 465px; display: flex; background: #eef0f0; border-right: 1px solid #e2e4e4; }
.list { width: 449px; padding-top: 4px; }
.q { height: 73.250px; border-top: 1px solid #d4dada; display: flex; padding: 11px 0 0 6px; color: #465360; word-spacing: 1px; }
.dot { width: 13px; height: 13px; margin-top: 8px; border-radius: 50%; background: #1086c8; }
.q b { margin: 1px 0 0 6px; width: 37.500px; font-size: 18px; line-height: 26px; color: #22282e; }
.q strong { display: block; font-size: 16px; line-height: 25.500px; font-weight: 700; }
.q small { display: block; margin-top: 1px; font-size: 13.100px; line-height: 26px; }
.up { margin: 0 25px 0 auto; }
.todo .dot { background: #949fa1; }
h2 { width: max-content; height: 39px; margin: 51px 0 0; padding: 0 26px 0 25px; border-radius: 0 3px 3px 0; background: #9aa2a9; color: #fff; font-size: 20px; line-height: 39px; font-weight: 700; word-spacing: 1.200px; }
.q:has(+ h2) { border-bottom: 1px solid #d4dada; }
.todo { margin-top: 12px; height: 74px; border-top: 0; border-bottom: 1px solid #d4dada; padding-top: 12px; }
.current { background: #fff; height: 73px; }

.scroll { display: flex; flex-direction: column; align-items: center; background: #f1f1f1; }
.arrow { width: 7px; height: 4px; margin-top: 6px; }
.down { margin: auto 0 5px; }
.side-scroll { width: 15px; margin-left: 0; }
.side-scroll .thumb { width: 11px; height: 636px; margin-top: 246px; background: #c1c1c1; }
.main-scroll { width: 15px; }
.main-scroll .thumb { width: 11px; height: 399px; margin-top: 4px; background: #c1c1c1; }

main { width: 1375px; padding: 33px 37px 0 36px; font-size: 18px; word-spacing: 1.300px; overflow: hidden; height: 906px; }
.qhead { height: 36px; display: flex; border-bottom: 1px solid #e4e4e4; line-height: 34px; }
.qhead b { margin-right: 18px; }
.qhead span { margin-left: auto; margin-right: 25px; color: #465360; }
.qhead svg { margin-top: 8px; }
h3 { margin: 38px 0 29px; font-size: 18px; line-height: 26px; color: #465360; font-weight: 700; }
p { margin: 0 0 18px; }
p b { font-weight: 600; }
.loose { margin-bottom: 19px; }
.tight { margin-bottom: 17px; }
.ln { display: block; height: 26px; line-height: 26px; white-space: nowrap; }
.w2 { height: 27.500px; }
.w3 { height: 29.500px; }
.m { display: inline-block; font: 21.500px/24px "Liberation Serif", serif; word-spacing: 0; height: 24px; }
.m sub, .m sup { font-size: 15.500px; line-height: 0; }
.m sub { vertical-align: -3px; }
.m sup { vertical-align: 8px; }
.t1 { width: 14.500px; }
.vars { width: 94px; text-align-last: justify; }
.eqs { width: 249px; text-align-last: justify; }
.range { width: 156px; text-align-last: justify; }
pre { margin: 16px 0 0; height: 209px; padding: 13px 13px 0; border: 1px solid #c8caca; background: #f8f8f8; font: 18px/26px "DejaVu Sans Mono", monospace; word-spacing: 1.100px; }
pre i { font-style: normal; }
.k { color: #008; }
.t { color: #606; }
.p { color: #660; }
.s { color: #080; }
.dashes { height: 12px; margin-top: 18px; border: dashed #e0e0e0; border-width: 1px 0; }
.help { position: absolute; right: 16px; bottom: 12px; width: 47px; height: 48px; }
```
